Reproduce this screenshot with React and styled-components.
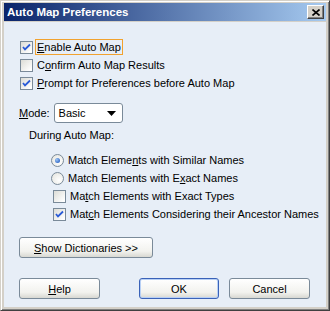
import React from 'react';
import styled, { createGlobalStyle } from 'styled-components';

const Global = createGlobalStyle`
  body {
    margin: 0;
    background: #d4d0c8;
  }
`;

const Window = styled.div`
  width: 330px;
  height: 311px;
  box-sizing: border-box;
  border-top: 1px solid #d4d0c8;
  border-left: 1px solid #d4d0c8;
  border-right: 1px solid #404040;
  border-bottom: 1px solid #404040;
  box-shadow: inset 1px 1px 0 #ffffff, inset -1px -1px 0 #808080;
  padding: 2px 3px 3px 3px;
  background: #d4d0c8;
  display: flex;
  flex-direction: column;
  font-family: "Liberation Sans", Arial, sans-serif;
  font-size: 11px;
  color: #000;
`;

const TitleBar = styled.div`
  height: 18px;
  background: linear-gradient(to right, #0a246a 0%, #a6caf0 100%);
  display: flex;
  align-items: center;
  justify-content: space-between;
  padding: 0 2px 0 3px;
  flex-shrink: 0;
`;

const Title = styled.span`
  color: #fff;
  font-weight: bold;
  font-size: 11.5px;
`;

const CloseBtn = styled.div`
  width: 17px;
  height: 14px;
  box-sizing: border-box;
  background: #d4d0c8;
  border-top: 1px solid #fff;
  border-left: 1px solid #fff;
  border-right: 1px solid #404040;
  border-bottom: 1px solid #404040;
  box-shadow: inset -1px -1px 0 #808080;
  display: flex;
  align-items: center;
  justify-content: center;
`;

const Body = styled.div`
  flex: 1;
  margin-top: 1px;
  background: #e7eef7;
  padding: 16px 0 0 16px;
  display: flex;
  flex-direction: column;
`;

const Row = styled.div`
  display: flex;
  align-items: center;
  height: 18px;
  margin-left: ${p => p.indent || 0}px;
`;

const Box = styled.span`
  width: 13px;
  height: 13px;
  box-sizing: border-box;
  border: 1px solid #7a8a99;
  background: linear-gradient(135deg, #dcdcd6 0%, #ffffff 90%);
  display: flex;
  align-items: center;
  justify-content: center;
  margin-right: 2px;
  flex-shrink: 0;
`;

const Radio = styled.span`
  width: 13px;
  height: 13px;
  box-sizing: border-box;
  border-radius: 50%;
  border: 1px solid #7a8a99;
  background: radial-gradient(circle at 65% 65%, #ffffff 0%, #e2e2dc 100%);
  display: flex;
  align-items: center;
  justify-content: center;
  margin-right: 2px;
  flex-shrink: 0;
`;

const Dot = styled.span`
  width: 5px;
  height: 5px;
  border-radius: 50%;
  background: radial-gradient(circle at 35% 35%, #9ec6f5 0%, #2c64c4 80%);
`;

const Label = styled.span`
  padding: 1px 1px;
  border: 1px solid ${p => (p.focus ? '#f1a22f' : 'transparent')};
  white-space: nowrap;
`;

const U = styled.span`
  text-decoration: underline;
`;

const ModeRow = styled.div`
  display: flex;
  align-items: center;
  margin-top: 11px;
  gap: 4px;
  margin-left: -1px;
`;

const Select = styled.div`
  width: 69px;
  height: 20px;
  box-sizing: border-box;
  border: 1px solid #7a8a99;
  border-radius: 3px;
  background: #fff;
  display: flex;
  align-items: center;
  justify-content: space-between;
  padding: 0 6px 0 4px;
`;

const Heading = styled.div`
  margin: 6px 0 10px 9px;
`;

const Button = styled.div`
  width: ${p => p.w}px;
  height: 21px;
  box-sizing: border-box;
  border: 1px solid ${p => (p.def ? '#3a62b8' : '#7a8a99')};
  border-radius: 3px;
  background: linear-gradient(to bottom, #ffffff 0%, #f2f2ee 70%, #d8d8d2 100%);
  box-shadow: ${p => (p.def ? 'inset 0 0 0 1px #b8d0f5' : 'none')};
  display: flex;
  align-items: center;
  justify-content: center;
`;

const DictRow = styled.div`
  margin-top: 14px;
  margin-left: -1px;
`;

const Footer = styled.div`
  display: flex;
  margin-top: 20px;
  margin-left: -1px;
`;

const Spacer = styled.div`
  width: ${p => p.w}px;
`;

const Check = () => (
  <svg width="9" height="9" viewBox="0 0 9 9">
    <path d="M1 4 L3 6.5 L8 1.5" stroke="#2a5bd7" strokeWidth="1.8" fill="none" />
  </svg>
);

const Arrow = () => (
  <svg width="9" height="5" viewBox="0 0 9 5">
    <path d="M0 0 H9 L4.5 5 Z" fill="#000" />
  </svg>
);

const X = () => (
  <svg width="8" height="7" viewBox="0 0 8 7">
    <path d="M0.5 0.5 L7.5 6.5 M7.5 0.5 L0.5 6.5" stroke="#000" strokeWidth="1.6" />
  </svg>
);

export default function App() {
  return (
    <>
      <Global />
      <Window>
        <TitleBar>
          <Title>Auto Map Preferences</Title>
          <CloseBtn><X /></CloseBtn>
        </TitleBar>
        <Body>
          <Row>
            <Box><Check /></Box>
            <Label focus><U>E</U>nable Auto Map</Label>
          </Row>
          <Row>
            <Box />
            <Label>C<U>o</U>nfirm Auto Map Results</Label>
          </Row>
          <Row>
            <Box><Check /></Box>
            <Label><U>P</U>rompt for Preferences before Auto Map</Label>
          </Row>
          <ModeRow>
            <span><U>M</U>ode:</span>
            <Select>
              <span>Basic</span>
              <Arrow />
            </Select>
          </ModeRow>
          <Heading>During Auto Map:</Heading>
          <Row indent={31}>
            <Radio><Dot /></Radio>
            <Label>Match Eleme<U>n</U>ts with Similar Names</Label>
          </Row>
          <Row indent={31}>
            <Radio />
            <Label>Match Elements with E<U>x</U>act Names</Label>
          </Row>
          <Row indent={33}>
            <Box />
            <Label>Ma<U>t</U>ch Elements with Exact Types</Label>
          </Row>
          <Row indent={33}>
            <Box><Check /></Box>
            <Label>Mat<U>c</U>h Elements Considering their Ancestor Names</Label>
          </Row>
          <DictRow>
            <Button w={134}><span><U>S</U>how Dictionaries &gt;&gt;</span></Button>
          </DictRow>
          <Footer>
            <Button w={81}><span><U>H</U>elp</span></Button>
            <Spacer w={39} />
            <Button w={80} def>OK</Button>
            <Spacer w={10} />
            <Button w={81}>Cancel</Button>
          </Footer>
        </Body>
      </Window>
    </>
  );
}
